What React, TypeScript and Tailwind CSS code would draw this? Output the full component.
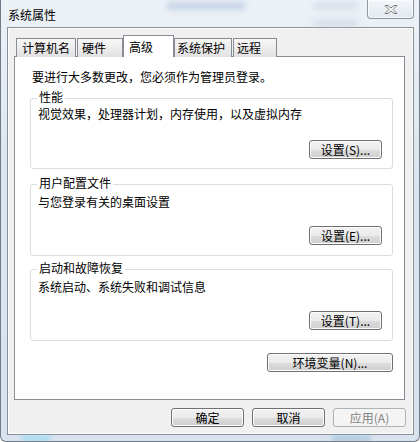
import React from 'react';

type BtnProps = {
  children: React.ReactNode;
  className?: string;
  disabled?: boolean;
};

const Btn: React.FC<BtnProps> = ({ children, className = '', disabled = false }) => (
  <button
    disabled={disabled}
    className={`h-[19px] shrink-0 rounded-[3px] border text-[12px] leading-none ${
      disabled
        ? 'border-[#adb2b5] bg-[#f4f4f4] text-[#838383]'
        : 'border-[#707070] bg-[linear-gradient(to_bottom,#f2f2f2_0%,#ebebeb_50%,#dddddd_50%,#cfcfcf_100%)] text-black shadow-[inset_0_0_0_1px_#fcfcfc]'
    } ${className}`}
  >
    {children}
  </button>
);

type GroupProps = {
  title: string;
  desc: string;
  button: string;
  boxClass: string;
  descClass: string;
  btnClass: string;
};

const Group: React.FC<GroupProps> = ({ title, desc, button, boxClass, descClass, btnClass }) => (
  <div className={`relative ml-[15px] flex w-[363px] flex-col rounded-[3px] border border-[#d5dfe5] ${boxClass}`}>
    <span className="absolute -top-[8px] left-[6px] bg-white px-[2px] leading-[12px]">{title}</span>
    <p className={`pl-[7px] leading-[14px] ${descClass}`}>{desc}</p>
    <Btn className={`mr-[10px] mt-auto w-[73px] self-end ${btnClass}`}>{button}</Btn>
  </div>
);

const tabBase = 'border-x border-t border-[#898c95] text-[12px] leading-[16px]';
const tabIdle = `${tabBase} h-[19px] bg-[linear-gradient(to_bottom,#f7f7f7,#e1e1e1)] pt-[1px]`;

export default function App() {
  return (
    <div className="relative flex h-[442px] w-[420px] flex-col overflow-hidden rounded-b-[6px] border-x border-b border-[#6f7b88] bg-[linear-gradient(to_bottom,#edf2f7,#dbe5ef_40%,#d9e3ee)] font-['Noto_Sans_CJK_SC',sans-serif] text-[12px] text-black">
      {/* glass blur behind the title bar */}
      <div className="pointer-events-none absolute left-[165px] top-[2px] h-[8px] w-[80px] rounded-full bg-[#9fb6d6] opacity-50 blur-[3px]" />
      <div className="pointer-events-none absolute left-[312px] top-[3px] h-[6px] w-[45px] rounded-full bg-[#b7c6d8] opacity-50 blur-[3px]" />
      <div className="pointer-events-none absolute left-[312px] top-[20px] h-[6px] w-[45px] rounded-full bg-[#b7c6d8] opacity-50 blur-[3px]" />
      <div className="pointer-events-none absolute bottom-[0px] left-[20px] h-[5px] w-[30px] rounded-full bg-[#7fd3f0] opacity-60 blur-[2px]" />
      <div className="pointer-events-none absolute bottom-[0px] left-[330px] h-[5px] w-[40px] rounded-full bg-[#8fb8d8] opacity-60 blur-[2px]" />

      {/* title bar */}
      <div className="relative flex h-[27px] shrink-0 items-start justify-between">
        <span className="pl-[7px] pt-[7px] text-[12px] leading-[16px]">系统属性</span>
        <div className="mr-[5px] flex h-[19px] w-[47px] items-center justify-center rounded-b-[4px] border-x border-b border-[#8c98a6] bg-[linear-gradient(to_bottom,#f3f6fa,#e2e9f1)] shadow-[inset_0_0_0_1px_#ffffffaa]">
          <svg width="14" height="11" viewBox="0 0 14 11" className="mt-[1px]">
            <path
              d="M1 1.5 L4 1.5 L7 4 L10 1.5 L13 1.5 L9 5.5 L13 9.5 L10 9.5 L7 7 L4 9.5 L1 9.5 L5 5.5 Z"
              fill="#f7f7f7"
              stroke="#7d7d7d"
              strokeWidth="1"
              strokeLinejoin="round"
            />
          </svg>
        </div>
      </div>

      {/* client area */}
      <div className="ml-[6px] flex h-[408px] w-[407px] shrink-0 flex-col border border-[#8a8f96] bg-[#f0f0f0] shadow-[inset_0_0_0_1px_#fbfbfb]">
        {/* tabs */}
        <div className="relative -mb-px ml-[8px] mt-[7px] flex h-[22px] items-end">
          <div className={`${tabIdle} w-[60px] pl-[5px]`}>计算机名</div>
          <div className={`${tabIdle} ml-[1px] w-[46px] pl-[4px]`}>硬件</div>
          <div className={`${tabBase} relative z-10 h-[22px] w-[51px] bg-white pl-[5px] pt-[3px]`}>高级</div>
          <div className={`${tabIdle} w-[58px] pl-[2px]`}>系统保护</div>
          <div className={`${tabIdle} ml-[1px] w-[44px] pl-[3px]`}>远程</div>
        </div>

        {/* tab panel */}
        <div className="ml-[6px] flex h-[344px] w-[391px] flex-col border border-[#898c95] bg-white">
          <p className="pl-[17px] pt-[12px] leading-[16px]">要进行大多数更改，您必须作为管理员登录。</p>
          <Group
            title="性能"
            desc="视觉效果，处理器计划，内存使用，以及虚拟内存"
            button="设置(S)..."
            boxClass="mt-[13px] h-[71px]"
            descClass="mt-[8px]"
            btnClass="mb-[9px]"
          />
          <Group
            title="用户配置文件"
            desc="与您登录有关的桌面设置"
            button="设置(E)..."
            boxClass="mt-[15px] h-[72px]"
            descClass="mt-[10px]"
            btnClass="mb-[10px]"
          />
          <Group
            title="启动和故障恢复"
            desc="系统启动、系统失败和调试信息"
            button="设置(T)..."
            boxClass="mt-[13px] h-[72px]"
            descClass="mt-[10px]"
            btnClass="mb-[10px]"
          />
          <Btn className="mr-[11px] mt-[12px] w-[126px] self-end">环境变量(N)...</Btn>
        </div>

        {/* dialog buttons */}
        <div className="mr-[7px] mt-[8px] flex justify-end gap-[8px]">
          <Btn className="w-[73px]">确定</Btn>
          <Btn className="w-[73px]">取消</Btn>
          <Btn className="w-[73px]" disabled>
            应用(A)
          </Btn>
        </div>
      </div>
    </div>
  );
}
